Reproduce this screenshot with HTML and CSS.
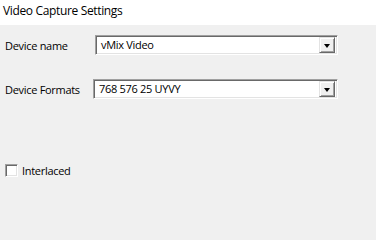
FILE: index.html
```html
<!DOCTYPE html>
<html>
<head>
<meta charset="utf-8">
<link rel="stylesheet" href="styles.css">
</head>
<body>
<div class="header">Video Capture Settings</div>
<div class="panel">
  <div class="row row-first">
    <span class="label">Device name</span>
    <div class="combo combo-name">
      <span class="value">vMix Video</span>
      <span class="btn"><span class="arrow"></span></span>
    </div>
  </div>
  <div class="row row-second">
    <span class="label">Device Formats</span>
    <div class="combo combo-format">
      <span class="value">768 576 25 UYVY</span>
      <span class="btn"><span class="arrow"></span></span>
    </div>
  </div>
  <label class="check-row">
    <span class="checkbox"></span>
    <span class="check-label">Interlaced</span>
  </label>
</div>
</body>
</html>
```
FILE: styles.css
```css
html, body {
  margin: 0;
  padding: 0;
  background: #f0f0f0;
}
body {
  width: 376px;
  height: 205px;
  font-family: "Open Sans", "Noto Sans", sans-serif;
  font-size: 11px;
  letter-spacing: -0.3px;
  color: #000;
  overflow: hidden;
}
.header {
  height: 25px;
  background: #fff;
  padding-left: 3px;
  font-size: 12px;
  letter-spacing: -0.35px;
  line-height: 22px;
  box-sizing: border-box;
}
.panel {
  display: flex;
  flex-direction: column;
}
.row {
  display: flex;
  align-items: center;
}
.row-first {
  margin-top: 10px;
}
.row-second {
  margin-top: 24px;
}
.label {
  padding-left: 5px;
}
.row-first .label {
  width: 90px;
}
.row-second .label {
  width: 88px;
}
.combo {
  width: 243px;
  height: 20px;
  box-sizing: border-box;
  background: #fff;
  border-top: 1px solid #a0a0a0;
  border-left: 1px solid #a0a0a0;
  border-right: 1px solid #fff;
  border-bottom: 1px solid #fff;
  box-shadow: inset 1px 1px 0 #696969, inset -1px -1px 0 #e3e3e3;
  display: flex;
  align-items: center;
  padding: 2px;
}
.combo-format {
  width: 245px;
}
.value {
  flex: 1;
  padding-left: 3px;
  line-height: 14px;
}
.btn {
  width: 16px;
  height: 16px;
  box-sizing: border-box;
  background: #f0f0f0;
  border-top: 1px solid #e3e3e3;
  border-left: 1px solid #e3e3e3;
  border-right: 1px solid #696969;
  border-bottom: 1px solid #696969;
  box-shadow: inset 1px 1px 0 #fff, inset -1px -1px 0 #a0a0a0;
  display: flex;
  align-items: center;
  justify-content: center;
}
.arrow {
  width: 0;
  height: 0;
  border-left: 3.5px solid transparent;
  border-right: 3.5px solid transparent;
  border-top: 4px solid #000;
  margin-top: 1px;
}
.check-row {
  display: flex;
  align-items: center;
  margin-top: 64px;
  padding-left: 5px;
}
.checkbox {
  width: 13px;
  height: 13px;
  box-sizing: border-box;
  background: #fff;
  border-top: 1px solid #a0a0a0;
  border-left: 1px solid #a0a0a0;
  border-right: 1px solid #fff;
  border-bottom: 1px solid #fff;
  box-shadow: inset 1px 1px 0 #696969, inset -1px -1px 0 #e3e3e3;
}
.check-label {
  padding-left: 4px;
}
```
